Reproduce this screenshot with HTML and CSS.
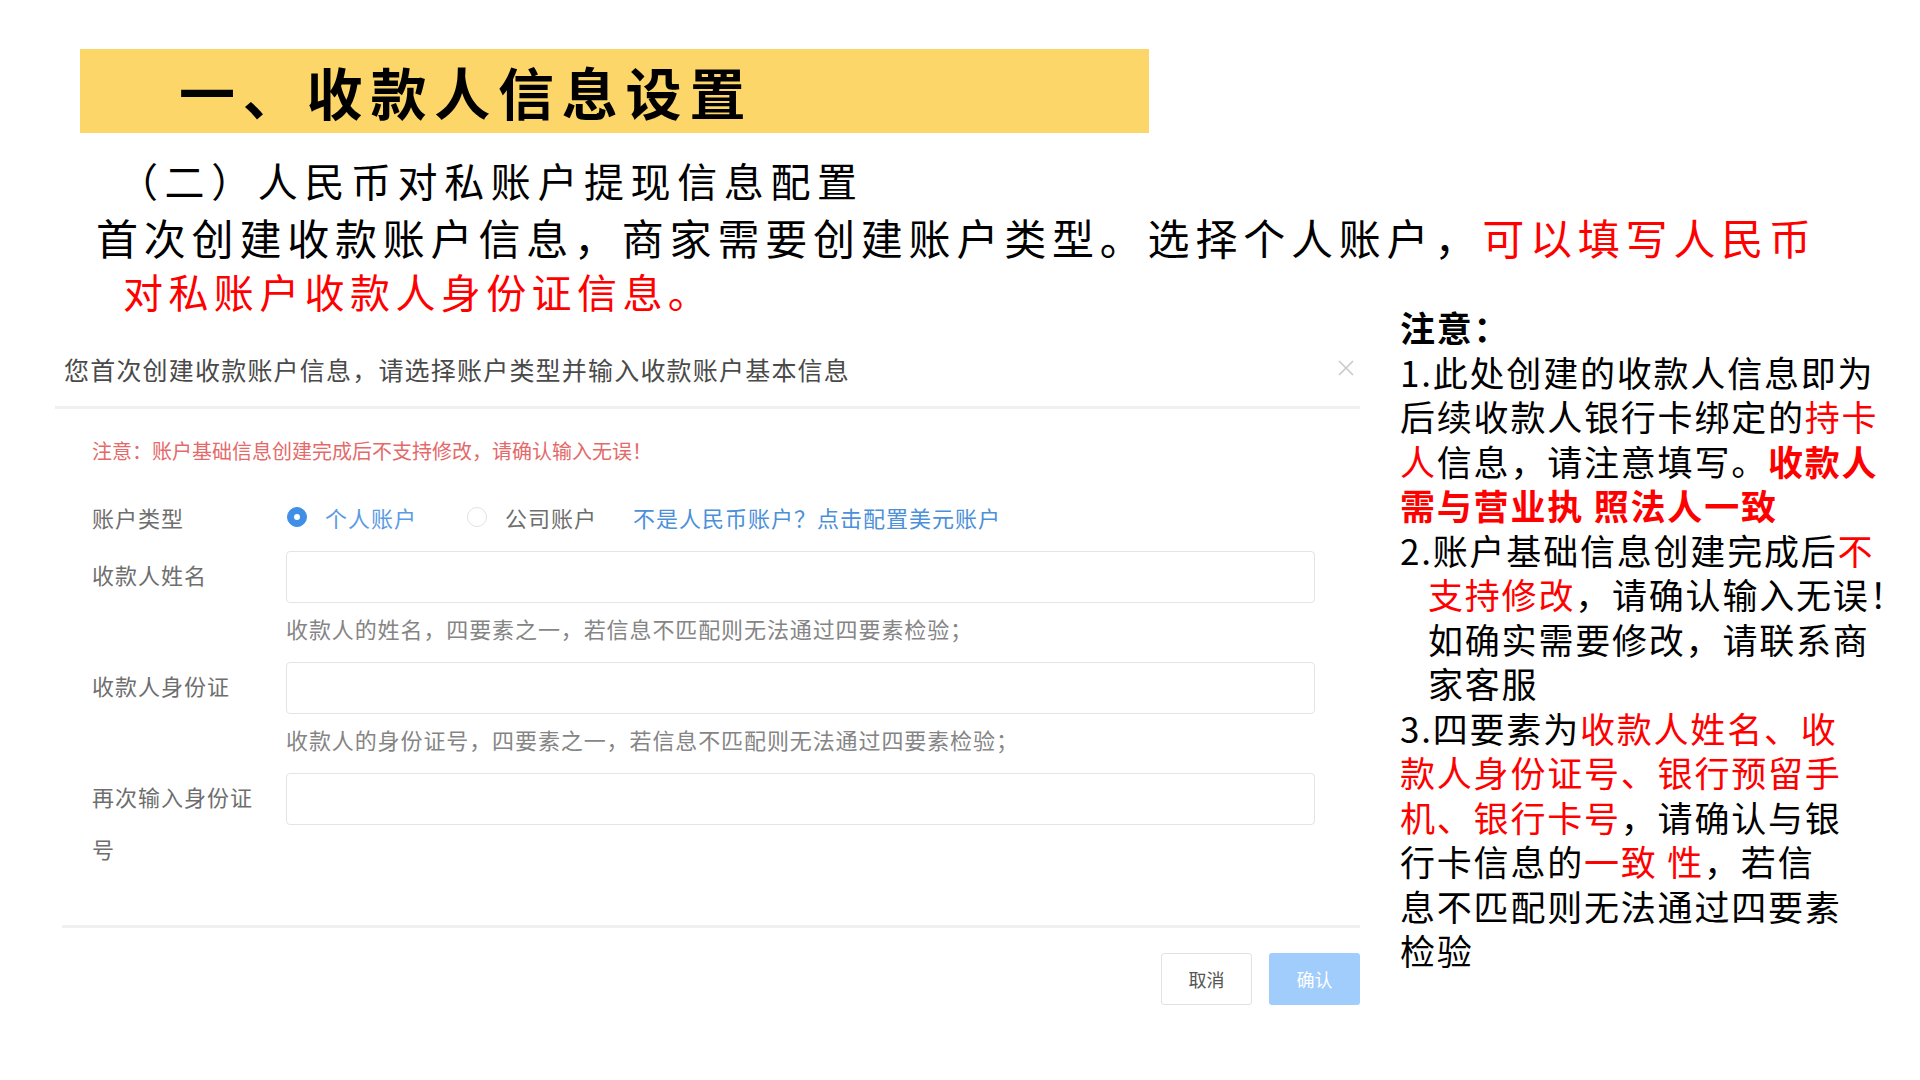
FILE: index.html
```html
<!DOCTYPE html>
<html lang="zh-CN">
<head>
<meta charset="utf-8">
<title>收款人信息设置</title>
<link rel="stylesheet" href="styles.css">
</head>
<body>
<div class="slide">
  <div class="banner"><h1 class="title">一、收款人信息设置</h1></div>
  <div class="subtitle">（二）人民币对私账户提现信息配置</div>
  <div class="lead lead-1">首次创建收款账户信息，商家需要创建账户类型。选择个人账户，<span class="red">可以填写人民币</span></div>

  <div class="content">
    <div class="left">
      <div class="lead lead-2 red">对私账户收款人身份证信息。</div>

      <div class="dialog">
        <div class="dlg-header">
          <span class="dlg-title">您首次创建收款账户信息，请选择账户类型并输入收款账户基本信息</span>
          <svg class="dlg-close" width="18" height="18" viewBox="0 0 18 18"><path d="M2 2 L16 16 M16 2 L2 16" stroke="#c8c8c8" stroke-width="1.6" fill="none"/></svg>
        </div>
        <div class="dlg-body">
          <div class="dlg-warn">注意：账户基础信息创建完成后不支持修改，请确认输入无误！</div>

          <div class="form-item form-radio">
            <div class="form-label">账户类型</div>
            <div class="form-field radios">
              <span class="radio checked"></span><span class="radio-text active">个人账户</span>
              <span class="radio"></span><span class="radio-text">公司账户</span>
              <span class="link">不是人民币账户？点击配置美元账户</span>
            </div>
          </div>

          <div class="form-item">
            <div class="form-label">收款人姓名</div>
            <div class="form-field">
              <div class="input"></div>
              <div class="help">收款人的姓名，四要素之一，若信息不匹配则无法通过四要素检验；</div>
            </div>
          </div>

          <div class="form-item">
            <div class="form-label">收款人身份证</div>
            <div class="form-field">
              <div class="input"></div>
              <div class="help">收款人的身份证号，四要素之一，若信息不匹配则无法通过四要素检验；</div>
            </div>
          </div>

          <div class="form-item form-last">
            <div class="form-label">再次输入身份证号</div>
            <div class="form-field">
              <div class="input"></div>
            </div>
          </div>
        </div>
        <div class="dlg-footer">
          <span class="btn btn-cancel">取消</span>
          <span class="btn btn-ok">确认</span>
        </div>
      </div>
    </div>

    <div class="notes">
      <div class="ln bold">注意：</div>
      <div class="ln">1.此处创建的收款人信息即为</div>
      <div class="ln">后续收款人银行卡绑定的<span class="red">持卡</span></div>
      <div class="ln"><span class="red">人</span>信息，请注意填写。<span class="red bold">收款人</span></div>
      <div class="ln red bold">需与营业执 照法人一致</div>
      <div class="ln">2.账户基础信息创建完成后<span class="red">不</span></div>
      <div class="ln indent"><span class="red">支持修改</span>，请确认输入无误！</div>
      <div class="ln indent">如确实需要修改，请联系商</div>
      <div class="ln indent">家客服</div>
      <div class="ln">3.四要素为<span class="red">收款人姓名、收</span></div>
      <div class="ln red">款人身份证号、银行预留手</div>
      <div class="ln"><span class="red">机、银行卡号</span>，请确认与银</div>
      <div class="ln">行卡信息的<span class="red">一致 性</span>，若信</div>
      <div class="ln">息不匹配则无法通过四要素</div>
      <div class="ln">检验</div>
    </div>
  </div>
</div>
</body>
</html>
```

FILE: styles.css
```css
html, body {
  margin: 0;
  padding: 0;
  background: #ffffff;
}

body {
  font-family: "Noto Sans CJK SC", "Noto Sans", sans-serif;
  color: #000;
}

.slide {
  width: 1920px;
  height: 1080px;
  padding-top: 49px;
  box-sizing: border-box;
  overflow: hidden;
}

.banner {
  margin-left: 80px;
  width: 1069px;
  height: 84px;
  background: #fcd669;
  display: flex;
  align-items: center;
  padding-left: 99px;
  box-sizing: border-box;
}

.title {
  margin: 0;
  font-size: 56px;
  font-weight: 700;
  letter-spacing: 7.8px;
  line-height: 84px;
  color: #000;
}

.subtitle {
  margin: 24px 0 0 118px;
  font-size: 40px;
  line-height: 46px;
  letter-spacing: 6.6px;
  white-space: nowrap;
}

.lead {
  font-size: 42px;
  line-height: 55px;
  white-space: nowrap;
}

.lead-1 {
  margin: 6px 0 0 96px;
  letter-spacing: 5.8px;
}

.lead-2 {
  margin-left: 123px;
  font-size: 40px;
  letter-spacing: 5.4px;
}

.red { color: #ff0000; }
.bold { font-weight: 700; }

.content {
  display: flex;
  align-items: flex-start;
}

.left {
  width: 1360px;
  flex: none;
}

/* ---------- dialog ---------- */
.dialog {
  margin: 25px 0 0 55px;
  width: 1305px;
}

.dlg-header {
  height: 65px;
  padding: 11px 5px 0 9px;
  box-sizing: border-box;
  border-bottom: 3px solid #f0f0f0;
  display: flex;
  align-items: flex-start;
  justify-content: space-between;
}

.dlg-title {
  font-size: 25px;
  line-height: 28px;
  letter-spacing: 1.2px;
  color: #4a4a4a;
  white-space: nowrap;
}

.dlg-close {
  margin-top: 4px;
}

.dlg-body {
  padding: 30px 45px 51px 37px;
}

.dlg-warn {
  font-size: 20px;
  line-height: 24px;
  letter-spacing: 0;
  color: #e46a6a;
  white-space: nowrap;
}

.form-item {
  display: grid;
  grid-template-columns: 194px 1029px;
  margin-top: 19px;
}

.form-radio {
  margin-top: 34px;
  height: 40px;
  align-items: center;
  margin-bottom: -5px;
}

.form-label {
  width: 165px;
  font-size: 22px;
  letter-spacing: 1px;
  line-height: 52px;
  color: #6e6e6e;
  margin-top: -3px;
}

.form-radio .form-label {
  line-height: 40px;
  margin-top: 0;
}

.radios {
  display: flex;
  align-items: center;
  font-size: 22px;
  letter-spacing: 1px;
  line-height: 40px;
  white-space: nowrap;
}

.radio {
  width: 20px;
  height: 20px;
  border-radius: 50%;
  border: 1px solid #e2e2e2;
  box-sizing: border-box;
  margin-left: 1px;
  margin-right: 18px;
  flex: none;
}

.radio.checked {
  background: #3f8fe6;
  border-color: #3f8fe6;
  position: relative;
}

.radio.checked::after {
  content: "";
  position: absolute;
  left: 6px;
  top: 6px;
  width: 6px;
  height: 6px;
  border-radius: 50%;
  background: #fff;
}

.radio-text {
  color: #6e6e6e;
  margin-right: 49px;
}

.radio-text.active {
  color: #5b9be4;
}

.radio-text + .radio + .radio-text {
  margin-right: 36px;
}

.link {
  color: #4b90d8;
}

.input {
  height: 52px;
  border: 1px solid #e4e4e4;
  border-radius: 4px;
  box-sizing: border-box;
  background: #fff;
}

.help {
  margin-top: 12px;
  margin-bottom: 2px;
  font-size: 22px;
  letter-spacing: 0.9px;
  line-height: 26px;
  color: #858585;
  white-space: nowrap;
}

.dlg-footer {
  border-top: 3px solid #f0f0f0;
  margin-left: 7px;
  padding-top: 25px;
  display: flex;
  justify-content: flex-end;
  gap: 17px;
}

.btn {
  width: 91px;
  height: 52px;
  box-sizing: border-box;
  border-radius: 3px;
  display: flex;
  align-items: center;
  justify-content: center;
  font-size: 18px;
}

.btn-cancel {
  border: 1px solid #e2e2e2;
  color: #555;
  background: #fff;
}

.btn-ok {
  background: #a0cdfb;
  color: #ffffff;
}

/* ---------- notes ---------- */
.notes {
  margin: 41px 0 0 40px;
  font-size: 35px;
  line-height: 44.5px;
  letter-spacing: 1.8px;
  color: #000;
}

.ln {
  white-space: nowrap;
}

.indent {
  padding-left: 28px;
}
```
